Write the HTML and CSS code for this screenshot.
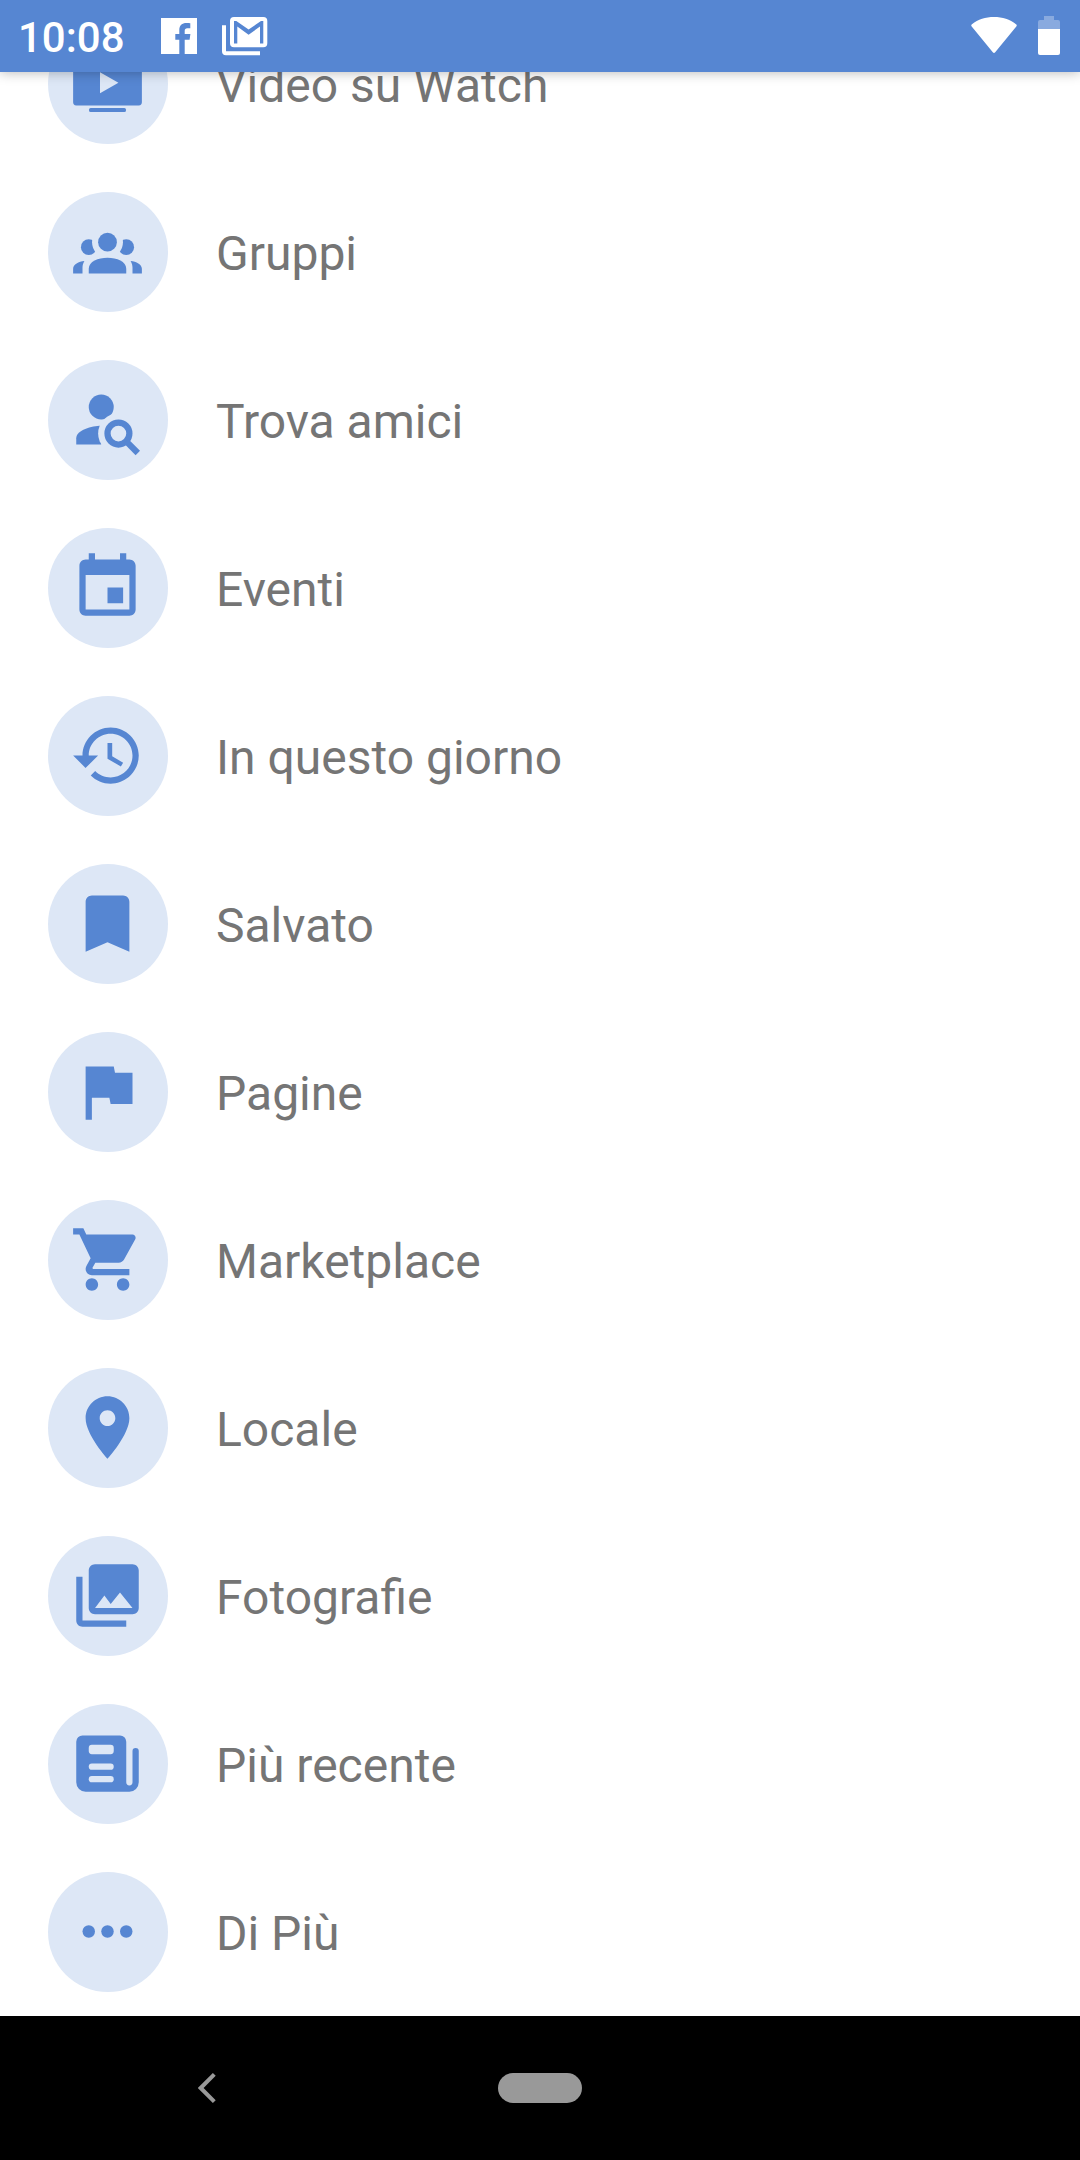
FILE: index.html
```
<!DOCTYPE html>
<html lang="it">
    <head>
        <meta charset="utf-8" />
        <title>Menu</title>
        <link rel="stylesheet" href="styles.css">
    </head>

    <body>
        <header class="status">
            <span class="clock">10:08</span>
            <svg class="facebook" viewBox="0 0 36 36">
                <path d="M0 0h36v36H23.7V21.7h4.9l.8-5.7h-5.7v-3.2c0-1.8.9-2.6 2.6-2.6h3V5.2c-1-.1-2.300-.2-3.800-.2-4.500 0-7.200 2.500-7.200 7v4h-4v5.700h4V36H0z" />
            </svg>
            <svg class="gmail" viewBox="0 0 46 39">
                <path d="M0 8.300h4V34.300h34V38.300H4a4 4 0 0 1-4-4z" />
                <path fill-rule="evenodd" d="M12 0h29.300a4 4 0 0 1 4 4v22.300a4 4 0 0 1-4 4H12a4 4 0 0 1-4-4V4a4 4 0 0 1 4-4zM12 4v22.500h3.300V9.500l11.300 8.300 11.400-8.300v17h3.300V4h-2.300L26.600 12.600 14.300 4z" />
            </svg>
            <svg class="wifi" viewBox="0 0 46 36">
                <path d="M1 7.200C7 2.500 14.500 0 23 0s16 2.500 22 7.200c.9.700 1 1.500.3 2.300L24.200 35.200c-.8.900-1.600.9-2.400 0L.7 9.500C0 8.700.1 7.900 1 7.200z" />
            </svg>
            <svg class="battery" viewBox="0 0 22 39">
                <path class="empty" d="M6 0h10v4h4a2 2 0 0 1 2 2v7H0V6a2 2 0 0 1 2-2h4z" />
                <path d="M0 13h22v24a2 2 0 0 1-2 2H2a2 2 0 0 1-2-2z" />
            </svg>
        </header>

        <main class="menu">
            <ul class="list">
                <li class="item">
                    <span class="icon">
                        <svg viewBox="0 0 24 24">
                            <path d="M3 3h18a2 2 0 0 1 2 2v13a1 1 0 0 1-1 1H2a1 1 0 0 1-1-1V5a2 2 0 0 1 2-2zM9.600 8.400v6.700l5.900-3.350z" fill-rule="evenodd" />
                            <rect x="6.100" y="19.850" width="11.800" height="1.250" rx=".5" />
                        </svg>
                    </span>
                    <span class="label">Video su Watch</span>
                </li>
                <li class="item">
                    <span class="icon">
                        <svg viewBox="0 0 24 24">
                            <circle cx="6" cy="10.600" r="2.500" />
                            <circle cx="18" cy="10.600" r="2.500" />
                            <circle class="gap" cx="12" cy="9" r="4.950" />
                            <circle cx="12" cy="9" r="3" />
                            <path d="M12 14c-3 0-6 1.200-6 3.500V19h12v-1.500c0-2.300-3-3.500-6-3.500z" />
                            <path d="M1 19v-1.500C1 16 2.800 15.200 4.600 15c-.4.700-.6 1.400-.6 2.200V19z" />
                            <path d="M23 19v-1.500c0-1.500-1.800-2.300-3.600-2.500.4.700.6 1.400.6 2.200V19z" />
                        </svg>
                    </span>
                    <span class="label">Gruppi</span>
                </li>
                <li class="item">
                    <span class="icon">
                        <svg viewBox="0 0 24 24">
                            <circle cx="10" cy="8" r="4" />
                            <path d="M10 14c-3 0-8 1.340-8 4v2h8.050z" />
                            <circle class="gap" cx="15.500" cy="16.500" r="6.500" />
                            <circle class="line" cx="15.500" cy="16.500" r="3.500" />
                            <path class="line" d="M18 19l3.700 3.700" />
                        </svg>
                    </span>
                    <span class="label">Trova amici</span>
                </li>
                <li class="item">
                    <span class="icon">
                        <svg viewBox="0 0 24 24">
                            <path d="M17 12h-5v5h5v-5zM16 1v2H8V1H6v2H5c-1.110 0-1.990.9-1.990 2L3 19c0 1.100.89 2 2 2h14c1.100 0 2-.9 2-2V5c0-1.100-.9-2-2-2h-1V1h-2zm3 18H5V8h14v11z" />
                        </svg>
                    </span>
                    <span class="label">Eventi</span>
                </li>
                <li class="item">
                    <span class="icon">
                        <svg viewBox="0 0 24 24">
                            <path d="M13 3c-4.970 0-9 4.030-9 9H1l3.890 3.890.07.14L9 12H6c0-3.870 3.130-7 7-7s7 3.130 7 7-3.130 7-7 7c-1.930 0-3.680-.79-4.940-2.060l-1.420 1.420C8.270 19.990 10.510 21 13 21c4.970 0 9-4.030 9-9s-4.030-9-9-9zm-1 5v5l4.280 2.540.72-1.210-3.500-2.080V8H12z" />
                        </svg>
                    </span>
                    <span class="label">In questo giorno</span>
                </li>
                <li class="item">
                    <span class="icon">
                        <svg viewBox="0 0 24 24">
                            <path d="M17 3H7c-1.100 0-2 .9-2 2v16l7-3 7 3V5c0-1.100-.9-2-2-2z" />
                        </svg>
                    </span>
                    <span class="label">Salvato</span>
                </li>
                <li class="item">
                    <span class="icon">
                        <svg viewBox="0 0 24 24">
                            <path d="M14.400 6L14 4H5v17h2v-7h5.600l.4 2h7V6z" />
                        </svg>
                    </span>
                    <span class="label">Pagine</span>
                </li>
                <li class="item">
                    <span class="icon">
                        <svg viewBox="0 0 24 24">
                            <path d="M7 18c-1.100 0-1.990.9-1.990 2S5.900 22 7 22s2-.9 2-2-.9-2-2-2zM1 2v2h2l3.600 7.590-1.350 2.450c-.16.280-.25.610-.25.960 0 1.100.9 2 2 2h12v-2H7.420c-.14 0-.25-.11-.25-.25l.03-.12.900-1.630h7.450c.75 0 1.410-.41 1.750-1.030l3.580-6.490c.08-.14.120-.31.120-.48 0-.55-.45-1-1-1H5.210l-.94-2H1zm16 16c-1.100 0-1.990.9-1.990 2s.89 2 1.990 2 2-.9 2-2-.9-2-2-2z" />
                        </svg>
                    </span>
                    <span class="label">Marketplace</span>
                </li>
                <li class="item">
                    <span class="icon">
                        <svg viewBox="0 0 24 24">
                            <path d="M12 2C8.130 2 5 5.130 5 9c0 5.250 7 13 7 13s7-7.750 7-13c0-3.870-3.130-7-7-7zm0 9.500c-1.380 0-2.500-1.120-2.500-2.500s1.120-2.500 2.500-2.500 2.500 1.120 2.500 2.500-1.120 2.500-2.500 2.500z" />
                        </svg>
                    </span>
                    <span class="label">Locale</span>
                </li>
                <li class="item">
                    <span class="icon">
                        <svg viewBox="0 0 24 24">
                            <path d="M22 16V4c0-1.100-.9-2-2-2H8c-1.100 0-2 .9-2 2v12c0 1.100.9 2 2 2h12c1.100 0 2-.9 2-2zm-11-4l2.030 2.710L16 11l4 5H8l3-4zM2 6v14c0 1.100.9 2 2 2h14v-2H4V6H2z" />
                        </svg>
                    </span>
                    <span class="label">Fotografie</span>
                </li>
                <li class="item">
                    <span class="icon">
                        <svg viewBox="0 0 24 24">
                            <path d="M4 3h12a2 2 0 0 1 2 2v13a1 1 0 0 0 2 0V8a1 1 0 0 1 2 0v10a3 3 0 0 1-3 3H5a3 3 0 0 1-3-3V5a2 2 0 0 1 2-2z" />
                            <rect class="gap" x="6" y="6" width="8" height="3" rx="1" />
                            <rect class="gap" x="6" y="12" width="8" height="2" rx="1" />
                            <rect class="gap" x="6" y="16" width="8" height="2" rx="1" />
                        </svg>
                    </span>
                    <span class="label">Più recente</span>
                </li>
                <li class="item">
                    <span class="icon">
                        <svg viewBox="0 0 24 24">
                            <circle cx="6" cy="12" r="2" />
                            <circle cx="12" cy="12" r="2" />
                            <circle cx="18" cy="12" r="2" />
                        </svg>
                    </span>
                    <span class="label">Di Più</span>
                </li>
            </ul>
        </main>

        <nav class="navbar">
            <svg class="back" viewBox="0 0 18 30">
                <path d="M16.300 1.400L2.700 15l13.600 13.600" />
            </svg>
            <span class="home"></span>
        </nav>
    </body>
</html>
```

FILE: styles.css
```
* {
    box-sizing: border-box;
}

body {
    display: flex;
    flex-direction: column;
    width: 1080px;
    height: 2160px;
    margin: 0;
    background: #fff;
    font-family: Roboto, sans-serif;
    overflow: hidden;
}

svg {
    display: block;
    flex: none;
}

.status {
    display: flex;
    flex: none;
    align-items: flex-start;
    height: 72px;
    padding-left: 18px;
    background: #5686d2;
    box-shadow: 0 0 12px rgba(0, 0, 0, 0.3);
    color: #fff;
    fill: #fff;
    z-index: 1;
}

.clock {
    width: 143px;
    padding-top: 13px;
    font-size: 42px;
    font-weight: 500;
    line-height: 49px;
}

.facebook {
    width: 36px;
    height: 36px;
    margin-top: 18px;
}

.gmail {
    width: 46px;
    height: 39px;
    margin: 17px 0 0 25px;
}

.wifi {
    width: 46px;
    height: 36px;
    margin: 17px 21px 0 auto;
}

.battery {
    width: 22px;
    height: 39px;
    margin: 16px 20px 0 0;
}

.empty {
    opacity: 0.3;
}

.menu {
    display: flex;
    flex: 1;
    flex-direction: column;
    justify-content: flex-end;
    min-height: 0;
    overflow: hidden;
}

.list {
    margin: 0;
    padding: 0;
    list-style: none;
}

.item {
    display: flex;
    align-items: center;
    height: 168px;
    padding-left: 48px;
}

.icon {
    width: 120px;
    height: 120px;
    padding: 22px;
    border-radius: 50%;
    background: #dde7f6;
    fill: #5686d2;
}

.icon svg {
    width: 75px;
    height: 75px;
}

.gap {
    fill: #dde7f6;
}

.line {
    fill: none;
    stroke: #5686d2;
    stroke-width: 2;
}

.label {
    margin-left: 48px;
    padding-top: 3px;
    color: #757575;
    font-size: 48px;
    line-height: 56px;
}

.navbar {
    display: flex;
    flex: none;
    align-items: center;
    height: 144px;
    padding-left: 198px;
    background: #000;
}

.back {
    width: 18px;
    height: 30px;
    fill: none;
    stroke: #999;
    stroke-width: 4;
}

.home {
    width: 84px;
    height: 30px;
    margin-left: 282px;
    border-radius: 15px;
    background: #999;
}
```
